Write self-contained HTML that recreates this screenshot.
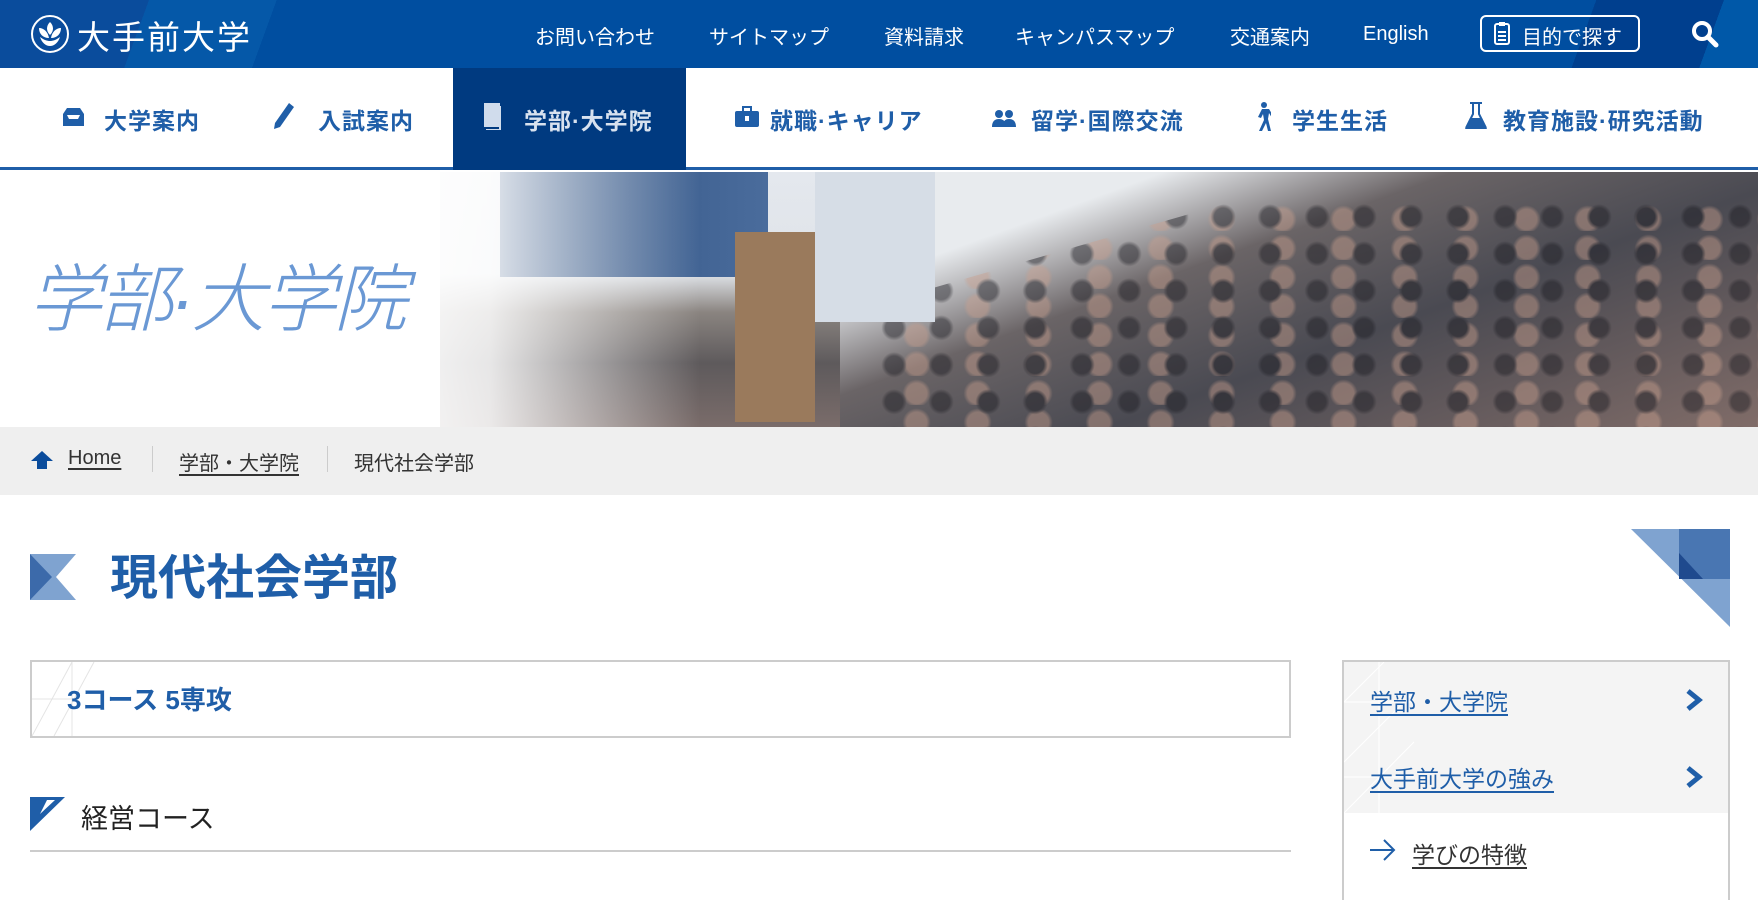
<!DOCTYPE html>
<html><head><meta charset="utf-8"><style>
*{margin:0;padding:0;box-sizing:border-box}
body{width:1758px;height:891px;overflow:hidden;background:#fff;font-family:"Liberation Sans","Noto Sans CJK JP",sans-serif;position:relative}
.a{position:absolute;white-space:nowrap}
#top{left:0;top:0;width:1758px;height:68px;background:linear-gradient(110deg,#0a4c9c 0,#0a4c9c 140px,#0558a8 140px,#0558a8 260px,#004ea0 260px,#004ea0 1500px,#003f8e 1500px,#003f8e 1620px,#0058a8 1620px)}
.tl{color:#fff;font-size:20px;top:21px}
#nav{left:0;top:68px;width:1758px;height:102px;background:#fff;border-bottom:3px solid #1f5ea8}
.ni{top:34px;font-size:23px;font-weight:bold;color:#1f5ea8;letter-spacing:1px}
#hero{left:0;top:172px;width:1758px;height:255px;overflow:hidden;background:#fff}
#bc{left:0;top:427px;width:1758px;height:68px;background:#efefef}
.bt{top:447px;font-size:20px;color:#333}
.u{text-decoration:underline;text-underline-offset:4px}
.sep{top:446px;width:1px;height:26px;background:#ccc}
</style></head><body>
<div id="top" class="a">
 <svg class="a" style="left:30px;top:14px" width="40" height="40" viewBox="0 0 40 40"><circle cx="20" cy="20" r="18" fill="none" stroke="#fff" stroke-width="2"/><path d="M20 8c-4 4-4 9 0 13 4-4 4-9 0-13zM9 14c0 6 4 10 10 10-1-6-5-10-10-10zM31 14c0 6-4 10-10 10 1-6 5-10 10-10zM10 23c2 6 6 9 10 9 4 0 8-3 10-9-4 3-7 4-10 4s-6-1-10-4z" fill="#fff"/></svg>
 <div class="a" style="left:77px;top:11px;color:#fff;font-size:33px;letter-spacing:2px">大手前大学</div>
 <div class="a tl" style="left:535px">お問い合わせ</div>
 <div class="a tl" style="left:709px">サイトマップ</div>
 <div class="a tl" style="left:884px">資料請求</div>
 <div class="a tl" style="left:1015px">キャンパスマップ</div>
 <div class="a tl" style="left:1230px">交通案内</div>
 <div class="a tl" style="left:1363px;top:23px">English</div>
 <div class="a" style="left:1480px;top:15px;width:160px;height:37px;border:2px solid #fff;border-radius:6px;color:#fff;font-size:20px;padding:4px 0 0 40px">目的で探す</div>
 <svg class="a" style="left:1493px;top:21px" width="18" height="25" viewBox="0 0 18 25"><rect x="2" y="3" width="14" height="20" rx="2" fill="none" stroke="#fff" stroke-width="2"/><rect x="6" y="1" width="6" height="4" fill="#fff"/><path d="M5 11h8M5 15h8M5 19h8" stroke="#fff" stroke-width="2"/></svg>
 <svg class="a" style="left:1690px;top:19px" width="30" height="30" viewBox="0 0 30 30"><circle cx="12" cy="12" r="8" fill="none" stroke="#fff" stroke-width="4"/><path d="M18 18l8 8" stroke="#fff" stroke-width="5" stroke-linecap="round"/></svg>
</div>
<div id="nav" class="a">
 <div class="a" style="left:453px;top:0;width:233px;height:102px;background:#003a80"></div>
 <svg class="a" style="left:60px;top:38px" width="27" height="22" viewBox="0 0 27 22"><path d="M3 8L7 2h13l4 6v12H3z" fill="#1f5ea8"/><path d="M7 9h13l-2 4H9z" fill="#fff"/></svg>
 <div class="a ni" style="left:104px">大学案内</div>
 <svg class="a" style="left:273px;top:34px" width="22" height="28" viewBox="0 0 22 28"><path d="M16 1l5 4L7 25l-6 2 1-6z" fill="#1f5ea8"/></svg>
 <div class="a ni" style="left:318px">入試案内</div>
 <svg class="a" style="left:483px;top:34px" width="20" height="28" viewBox="0 0 20 28"><rect x="1" y="1" width="16" height="24" fill="#d0dcec"/><path d="M17 4v24H3" fill="none" stroke="#d0dcec" stroke-width="2"/></svg>
 <div class="a ni" style="left:524px;color:#d8e2ef">学部·大学院</div>
 <svg class="a" style="left:734px;top:38px" width="26" height="22" viewBox="0 0 26 22"><rect x="1" y="5" width="24" height="16" rx="2" fill="#1f5ea8"/><rect x="9" y="1" width="8" height="5" fill="none" stroke="#1f5ea8" stroke-width="2"/><rect x="11" y="10" width="4" height="5" fill="#fff"/></svg>
 <div class="a ni" style="left:770px">就職·キャリア</div>
 <svg class="a" style="left:991px;top:40px" width="26" height="20" viewBox="0 0 26 20"><circle cx="8" cy="6" r="4" fill="#1f5ea8"/><circle cx="18" cy="6" r="4" fill="#1f5ea8"/><path d="M1 19c0-6 3-8 7-8s7 2 7 8zM12 19c0-6 2-8 6-8s7 2 7 8z" fill="#1f5ea8"/></svg>
 <div class="a ni" style="left:1031px">留学·国際交流</div>
 <svg class="a" style="left:1255px;top:34px" width="16" height="30" viewBox="0 0 16 30"><circle cx="9" cy="3" r="3" fill="#1f5ea8"/><path d="M7 7l-4 8 3 1 2-4 1 6-5 11h3l4-8 2 8h3l-3-12 1-6 3 5 2-1-5-8z" fill="#1f5ea8"/></svg>
 <div class="a ni" style="left:1292px">学生生活</div>
 <svg class="a" style="left:1464px;top:34px" width="24" height="28" viewBox="0 0 24 28"><rect x="6" y="0" width="12" height="2" fill="#1f5ea8"/><path d="M9 1v11L2 26M15 1v11l7 14" stroke="#1f5ea8" stroke-width="2" fill="none"/><path d="M6 16h12l5 11H1z" fill="#1f5ea8"/></svg>
 <div class="a ni" style="left:1503px">教育施設·研究活動</div>
</div>
<div id="hero" class="a">
 <div class="a" style="left:440px;top:0;width:1318px;height:255px;background:linear-gradient(180deg,#e4e8ee 0,#dfe3e8 40%,#8a8480 55%,#5e5a5c 75%,#7a6c6a 100%)"></div>
 <div class="a" style="left:840px;top:0;width:918px;height:255px;background:linear-gradient(160deg,#e8ebee 0,#e8ebee 20%,#6a6466 38%,#4a4a52 60%,#806c68 100%)"></div>
 <div class="a" style="left:880px;top:30px;width:878px;height:225px;opacity:.45;background:radial-gradient(circle at 30% 40%,#1c1c22 0,#1c1c22 22%,transparent 32%) 0 0/47px 37px,radial-gradient(circle at 60% 60%,#c9a08e 0,#c9a08e 25%,transparent 35%) 0 0/61px 29px;clip-path:polygon(40% 0,100% 0,100% 100%,0 100%,0 45%)"></div>
 <div class="a" style="left:500px;top:0;width:268px;height:105px;background:linear-gradient(90deg,#2c4e7e,#4a6c9c)"></div>
 <div class="a" style="left:815px;top:0;width:120px;height:150px;background:#d6dde6"></div>
 <div class="a" style="left:735px;top:60px;width:80px;height:190px;background:#9a7a5c"></div>
 <div class="a" style="left:0;top:0;width:700px;height:255px;background:linear-gradient(90deg,#fff 0,#fff 50%,rgba(255,255,255,.85) 70%,rgba(255,255,255,0) 100%)"></div>
 <div class="a" style="left:28px;top:68px;font-size:74px;color:#6a98d4;font-style:italic;font-weight:300;letter-spacing:-3px">学部·大学院</div>
</div>
<div id="bc" class="a"></div>
<svg class="a" style="left:31px;top:451px" width="22" height="18" viewBox="0 0 22 18"><path d="M11 0l11 10h-6v8H6v-8H0z" fill="#0a4c9c"/></svg>
<div class="a bt u" style="left:68px">Home</div>
<div class="a sep" style="left:152px"></div>
<div class="a bt u" style="left:179px">学部・大学院</div>
<div class="a sep" style="left:327px"></div>
<div class="a bt" style="left:354px">現代社会学部</div>
<svg class="a" style="left:30px;top:554px" width="46" height="46" viewBox="0 0 46 46"><rect width="46" height="46" fill="#7fa3d0"/><path d="M0 0L22 23 0 46z" fill="#3c6aaa"/><path d="M46 0L26 23 46 46z" fill="#fff"/></svg>
<div class="a" style="left:110px;top:538px;font-size:48px;font-weight:bold;color:#1f5ea8">現代社会学部</div>
<svg class="a" style="left:1631px;top:529px" width="99" height="98" viewBox="0 0 99 98"><path d="M0 0h99v98z" fill="#7fa3d0"/><path d="M48 0h51v50H48z" fill="#3c6aaa" opacity=".8"/><path d="M48 24l24 26H48z" fill="#1f4a8e"/></svg>
<div class="a" style="left:30px;top:660px;width:1261px;height:78px;border:2px solid #ccc"></div>
<svg class="a" style="left:32px;top:662px" width="80" height="74"><path d="M0 74L40 0M22 74L62 0M40 0v74M0 37h40" stroke="#e4e4e4" fill="none"/></svg>
<div class="a" style="left:67px;top:680px;font-size:26px;font-weight:bold;color:#1f5ea8">3コース 5専攻</div>
<svg class="a" style="left:30px;top:797px" width="35" height="34" viewBox="0 0 35 34"><path d="M0 0h35L0 34z" fill="#1f5ea8"/><path d="M10 17L17 3h8z" fill="#fff"/></svg>
<div class="a" style="left:81px;top:797px;font-size:27px;color:#222">経営コース</div>
<div class="a" style="left:30px;top:850px;width:1261px;height:2px;background:#ccc"></div>
<div class="a" style="left:1342px;top:660px;width:388px;height:240px;border:2px solid #ccc;border-bottom:none;background:#fff"></div>
<div class="a" style="left:1344px;top:662px;width:384px;height:151px;background:#f4f4f4"></div>
<svg class="a" style="left:1344px;top:662px" width="80" height="151"><path d="M0 40L40 0M0 100L70 30M0 151L70 80M35 0v151M0 40h70M0 115h70" stroke="#fff" fill="none"/></svg>
<div class="a" style="left:1370px;top:683px;font-size:23px;color:#1f5ea8"><span class="u">学部・大学院</span></div>
<div class="a" style="left:1370px;top:760px;font-size:23px;color:#1f5ea8"><span class="u">大手前大学の強み</span></div>
<svg class="a" style="left:1686px;top:689px" width="18" height="22" viewBox="0 0 18 22"><path d="M2 2l11 9-11 9" stroke="#1f5ea8" stroke-width="5" fill="none"/></svg>
<svg class="a" style="left:1686px;top:766px" width="18" height="22" viewBox="0 0 18 22"><path d="M2 2l11 9-11 9" stroke="#1f5ea8" stroke-width="5" fill="none"/></svg>
<svg class="a" style="left:1370px;top:839px" width="26" height="22" viewBox="0 0 26 22"><path d="M0 11h24M14 1l10 10-10 10" stroke="#1f5ea8" stroke-width="2" fill="none"/></svg>
<div class="a u" style="left:1412px;top:836px;font-size:23px;color:#333">学びの特徴</div>
</body></html>
